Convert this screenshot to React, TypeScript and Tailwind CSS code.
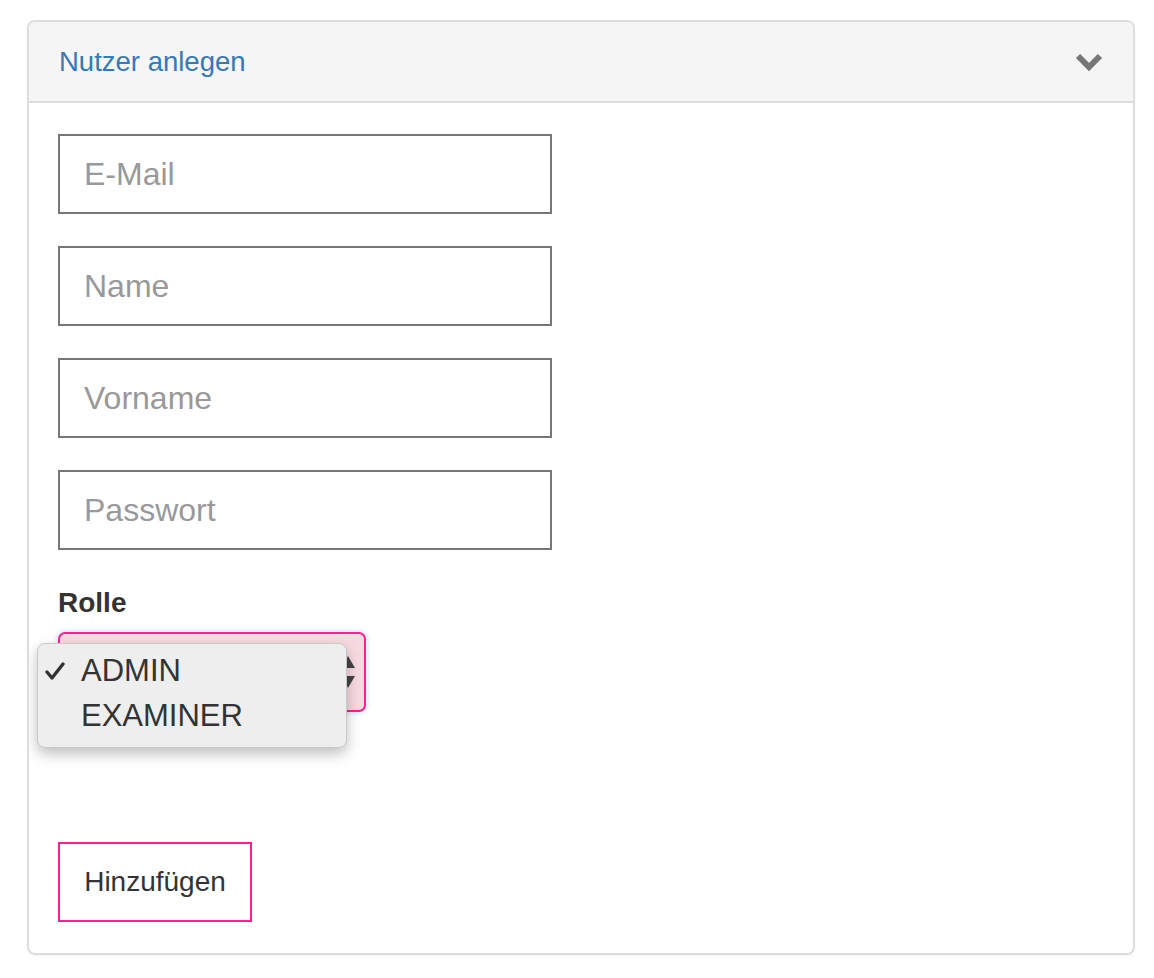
const FIELDS = ['E-Mail', 'Name', 'Vorname', 'Passwort'];
const ROLES = ['ADMIN', 'EXAMINER'];

function Chevron() {
  return (
    <svg width="28" height="20" viewBox="0 0 28 20" className="text-[#777]">
      <polyline
        points="3,4 14,15 25,4"
        fill="none"
        stroke="currentColor"
        strokeWidth="6"
        strokeLinejoin="miter"
      />
    </svg>
  );
}

function Check() {
  return (
    <svg width="20" height="20" viewBox="0 0 20 20" className="text-[#333]">
      <polyline
        points="2,11 7,17 18,3"
        fill="none"
        stroke="currentColor"
        strokeWidth="3.4"
        strokeLinecap="round"
        strokeLinejoin="round"
      />
    </svg>
  );
}

export default function App() {
  return (
    <div
      className="min-h-[978px] bg-white pt-[20px] pl-[27px] pr-[19px]"
      style={{ fontFamily: '"Liberation Sans", Arial, sans-serif' }}
    >
      <div className="w-[1108px] h-[935px] border-2 border-[#dddddd] rounded-[8px] overflow-hidden shadow-[0_1px_2px_rgba(0,0,0,0.05)]">
        {/* header */}
        <div className="h-[81px] bg-[#f5f5f5] border-b-2 border-[#dddddd] flex items-center justify-between pl-[30px] pr-[30px]">
          <span className="text-[27.5px] text-[#337ab7] mt-[1px]">Nutzer anlegen</span>
          <Chevron />
        </div>

        {/* body */}
        <div className="pt-[31px] pl-[29px]">
          <div className="flex flex-col gap-[32px]">
            {FIELDS.map(f => (
              <input
                key={f}
                placeholder={f}
                className="w-[494px] h-[80px] border-2 border-[#777] px-[24px] text-[32px] text-[#333] placeholder:text-[#999] outline-none bg-white"
              />
            ))}
          </div>

          <div className="mt-[38px] text-[28px] font-bold text-[#333] leading-[30px]">Rolle</div>

          <div className="relative mt-[14px] w-[308px]">
            <div className="h-[80px] border-2 border-[#ff1f8f] rounded-[7px] bg-[#f7dadf] shadow-[0_0_6px_rgba(120,170,230,0.45)] flex items-center justify-end pr-[8px]">
              <svg width="16" height="36" viewBox="0 0 16 36" className="text-[#444]">
                <polygon points="8,2 15,14 1,14" fill="currentColor" />
                <polygon points="1,22 15,22 8,34" fill="currentColor" />
              </svg>
            </div>

            {/* open dropdown */}
            <div className="absolute left-[-21px] top-[11px] w-[310px] h-[105px] bg-[#efeeef] border border-[#c8c8c8] rounded-[8px] shadow-[0_6px_14px_rgba(0,0,0,0.25)] pt-[4px]">
              {ROLES.map((r, i) => (
                <div key={r} className="h-[45px] flex items-center">
                  <div className="w-[43px] pl-[7px] flex">
                    {i === 0 && <Check />}
                  </div>
                  <span className="text-[31px] text-[#333] leading-none">{r}</span>
                </div>
              ))}
            </div>
          </div>

          <button className="mt-[130px] w-[194px] h-[80px] border-2 border-[#ff1f8f] bg-white text-[28px] text-[#333]">
            Hinzufügen
          </button>
        </div>
      </div>
    </div>
  );
}
